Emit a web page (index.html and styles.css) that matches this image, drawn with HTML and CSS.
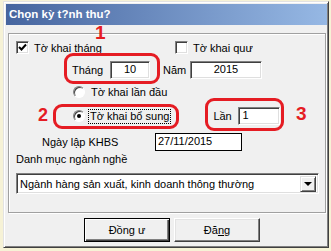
FILE: index.html
```html
<!DOCTYPE html>
<html lang="vi">
<head>
    <meta charset="UTF-8">
    <title>Chọn kỳ tính thuế</title>
    <link rel="stylesheet" href="styles.css">
</head>
<body>
    <div class="window">
        <!-- Title -->
        <div class="titlebar">Chọn kỳ t?nh thu?</div>

        <!-- Group -->
        <div class="group">
            <div class="row row-check">
                <label class="check check-month">
                    <span class="box">
                        <svg width="11" height="11" viewBox="0 0 11 11"><polyline points="2,5 4.5,7.5 9,2.5" fill="none" stroke="#000" stroke-width="2"/></svg>
                    </span>Tờ khai tháng
                </label>
                <label class="check"><span class="box"></span>Tờ khai quư</label>
            </div>

            <div class="row row-period">
                <span class="lbl lbl-month">Tháng</span>
                <span class="field field-month">10</span>
                <span class="lbl lbl-year">Năm</span>
                <span class="field field-year">2015</span>
            </div>

            <div class="row row-first">
                <span class="radio"></span>
                <span class="radio-text">Tờ khai lần đầu</span>
            </div>

            <div class="row row-extra">
                <span class="radio checked"></span>
                <span class="radio-text focus">Tờ khai bổ sung</span>
                <span class="lbl lbl-times">Lần</span>
                <span class="field field-times">1</span>
            </div>

            <div class="row row-date">
                <span class="lbl lbl-date">Ngày lập KHBS</span>
                <span class="field field-date">27/11/2015</span>
            </div>

            <div class="row row-caption">Danh mục ngành nghề</div>

            <div class="row">
                <div class="select">
                    <span class="select-text">Ngành hàng sản xuất, kinh doanh thông thường</span>
                    <span class="select-btn"><span class="arrow"></span></span>
                </div>
            </div>
        </div>

        <!-- Buttons -->
        <div class="buttons">
            <button class="btn btn-default">Đồng ư</button>
            <button class="btn">Đă<u>n</u>g</button>
        </div>

        <!-- Ghi chú đỏ -->
        <span class="mark mark-1">1</span>
        <span class="mark mark-2">2</span>
        <span class="mark mark-3">3</span>
        <span class="ring ring-1"></span>
        <span class="ring ring-2"></span>
        <span class="ring ring-3"></span>
    </div>
</body>
</html>
```

FILE: styles.css
```css
body {
    margin: 0;
    background-color: #f6f2d6;
    font-family: "Liberation Sans", Arial, sans-serif;
    font-size: 11px;
    color: #000;
}

.window {
    position: relative;
    box-sizing: border-box;
    width: 326px;
    height: 247px;
    margin: 1px 0 0 3px;
    padding: 2px 1px 0 2px;
    background-color: #f0f0f0;
    border: 1px solid;
    border-color: #e3e3e3 #404040 #404040 #e3e3e3;
    box-shadow: inset 1px 1px #fff, inset -1px -1px #808080;
}

.titlebar {
    height: 21px;
    line-height: 21px;
    padding-left: 3px;
    background: linear-gradient(to right, #46659f, #96b8e4);
    color: #fff;
    font-weight: bold;
    font-size: 11.5px;
}

.group {
    box-sizing: border-box;
    width: 318px;
    height: 180px;
    margin: 8px 0 0 2px;
    border: 1px solid #a0a0a0;
    box-shadow: inset 1px 1px #fff, 1px 1px #fff;
}

.row {
    display: flex;
    align-items: center;
    white-space: nowrap;
}

.row-check {
    height: 13px;
    margin-top: 7px;
    padding-left: 7px;
}

.check {
    display: flex;
    align-items: center;
}

.check-month {
    width: 159px;
}

.box {
    box-sizing: border-box;
    width: 13px;
    height: 13px;
    margin-right: 5px;
    background: #fff;
    border: 1px solid;
    border-color: #808080 #fff #fff #808080;
    box-shadow: inset 1px 1px #404040, inset -1px -1px #dfdfdf;
    display: flex;
    align-items: center;
    justify-content: center;
}

.lbl {
    display: block;
    flex: none;
}

.field {
    box-sizing: border-box;
    flex: none;
    height: 18px;
    line-height: 15px;
    background: #fff;
    border: 1px solid;
    border-color: #808080 #fff #fff #808080;
    box-shadow: inset 1px 1px #404040, inset -1px -1px #dfdfdf;
    padding: 0 3px;
}

.row-period {
    height: 18px;
    margin-top: 7px;
    padding-left: 63px;
}

.lbl-month {
    width: 38px;
}

.field-month {
    width: 40px;
    text-align: center;
}

.lbl-year {
    width: 27px;
    margin-left: 13px;
}

.field-year {
    width: 72px;
    text-align: center;
}

.row-first {
    height: 13px;
    margin-top: 6px;
    padding-left: 64px;
}

.radio {
    position: relative;
    box-sizing: border-box;
    flex: none;
    width: 12px;
    height: 12px;
    border-radius: 50%;
    background: #fff;
    border: 1px solid;
    border-color: #808080 #fff #fff #808080;
    box-shadow: inset 1px 1px #404040;
}

.radio.checked::after {
    content: "";
    position: absolute;
    left: 3px;
    top: 3px;
    width: 4px;
    height: 4px;
    border-radius: 50%;
    background: #000;
}

.radio-text {
    margin-left: 5px;
    padding: 0 1px;
}

.row-extra {
    height: 18px;
    margin-top: 9px;
    padding-left: 64px;
}

.focus {
    flex: none;
    margin-left: 3px;
    line-height: 13px;
    border: 1px dotted #000;
    padding: 0 1px 0 1px;
}

.lbl-times {
    width: 25px;
    margin-left: 42px;
}

.field-times {
    width: 42px;
}

.row-date {
    height: 18px;
    margin-top: 8px;
    padding-left: 33px;
}

.lbl-date {
    width: 113px;
}

.field-date {
    width: 87px;
    border: 1px solid #000;
    box-shadow: none;
    padding-left: 2px;
}

.row-caption {
    height: 13px;
    margin-top: 1px;
    padding-left: 7px;
}

.select {
    box-sizing: border-box;
    display: flex;
    align-items: center;
    justify-content: space-between;
    width: 303px;
    height: 21px;
    margin: 8px 0 0 7px;
    background: #fff;
    border: 1px solid;
    border-color: #808080 #fff #fff #808080;
    box-shadow: inset 1px 1px #404040, inset -1px -1px #dfdfdf;
    padding: 0 2px 0 3px;
}

.select-btn {
    box-sizing: border-box;
    width: 16px;
    height: 16px;
    background: #f0f0f0;
    border: 1px solid;
    border-color: #dfdfdf #404040 #404040 #dfdfdf;
    box-shadow: inset 1px 1px #fff, inset -1px -1px #808080;
    display: flex;
    align-items: center;
    justify-content: center;
}

.arrow {
    width: 0;
    height: 0;
    border-left: 4px solid transparent;
    border-right: 4px solid transparent;
    border-top: 4px solid #000;
}

.buttons {
    display: flex;
    gap: 4px;
    margin: 5px 0 0 78px;
}

.btn {
    box-sizing: border-box;
    width: 86px;
    height: 24px;
    padding: 0;
    font-family: inherit;
    font-size: 11px;
    color: #000;
    background: #f0f0f0;
    border: 1px solid;
    border-color: #fff #404040 #404040 #fff;
    box-shadow: inset -1px -1px #808080, inset 1px 1px #e3e3e3;
}

.btn-default {
    border: 1px solid #000;
    box-shadow: inset 1px 1px #fff, inset -1px -1px #404040, inset -2px -2px #808080;
}

/* Ghi chú đỏ */
.mark {
    position: absolute;
    color: #e51c23;
    font-weight: bold;
    line-height: 1;
}

.mark-1 {
    left: 91px;
    top: 21px;
    font-size: 19px;
}

.mark-2 {
    left: 34px;
    top: 104px;
    font-size: 18px;
}

.mark-3 {
    left: 292px;
    top: 102px;
    font-size: 19px;
}

.ring {
    position: absolute;
    box-sizing: border-box;
    border: 3px solid #e51c23;
    border-radius: 9px;
}

.ring-1 {
    left: 60px;
    top: 51px;
    width: 96px;
    height: 31px;
}

.ring-2 {
    left: 49px;
    top: 102px;
    width: 126px;
    height: 25px;
}

.ring-3 {
    left: 201px;
    top: 96px;
    width: 79px;
    height: 33px;
}
```
